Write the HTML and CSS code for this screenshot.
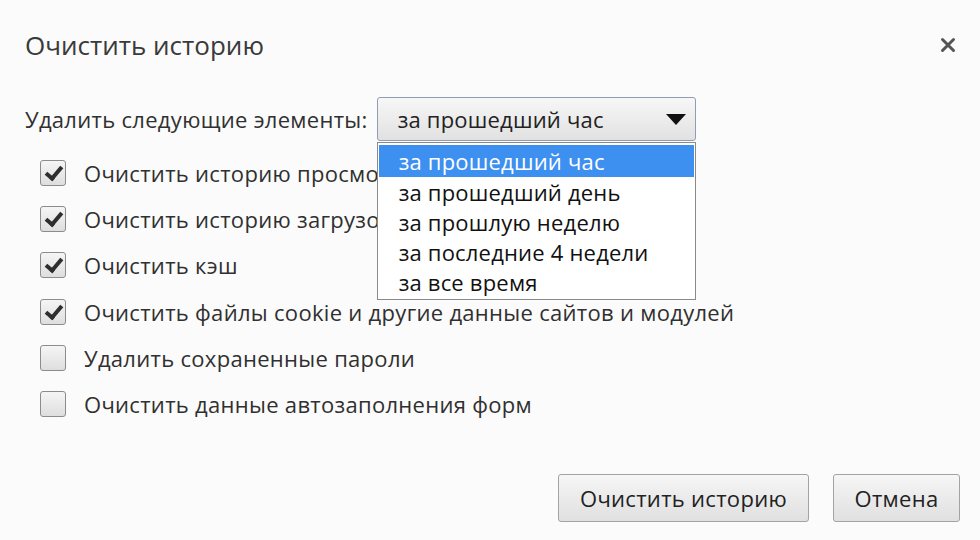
FILE: index.html
```html
<!DOCTYPE html>
<html lang="ru">

<head>
    <meta charset="UTF-8">
    <meta name="viewport" content="width=device-width, initial-scale=1.0">
    <title>Очистить историю</title>
    <link rel="stylesheet" href="styles.css">
</head>

<body>
    <div class="dialog">
        <div class="dialog-header">
            <h1 class="dialog-title">Очистить историю</h1>
            <button class="close-button" aria-label="Закрыть">
                <svg width="16" height="16" viewBox="0 0 16 16">
                    <path d="M2.5 2.5 L13.5 13.5 M13.5 2.5 L2.5 13.5" stroke="#555" stroke-width="3" stroke-linecap="round" />
                </svg>
            </button>
        </div>

        <div class="range-row">
            <span class="range-label">Удалить следующие элементы:</span>
            <div class="range-select">
                <div class="select-box">
                    <span>за прошедший час</span>
                    <span class="select-arrow"></span>
                </div>
                <!-- open dropdown -->
                <ul class="select-list">
                    <li class="selected">за прошедший час</li>
                    <li>за прошедший день</li>
                    <li>за прошлую неделю</li>
                    <li>за последние 4 недели</li>
                    <li>за все время</li>
                </ul>
            </div>
        </div>

        <div class="options">
            <label class="option"><span class="check checked"></span>Очистить историю просмотров</label>
            <label class="option"><span class="check checked"></span>Очистить историю загрузок</label>
            <label class="option"><span class="check checked"></span>Очистить кэш</label>
            <label class="option"><span class="check checked"></span>Очистить файлы cookie и другие данные сайтов и модулей</label>
            <label class="option"><span class="check"></span>Удалить сохраненные пароли</label>
            <label class="option"><span class="check"></span>Очистить данные автозаполнения форм</label>
        </div>

        <div class="dialog-footer">
            <button class="btn btn-wide">Очистить историю</button>
            <button class="btn">Отмена</button>
        </div>
    </div>
</body>

</html>
```

FILE: styles.css
```css
body {
    margin: 0;
    font-family: "Open Sans", "Noto Sans", sans-serif;
    background-color: #fbfbfb;
    color: #303030;
    letter-spacing: 0.3px;
}

.dialog {
    width: 980px;
    height: 540px;
    box-sizing: border-box;
    padding: 29px 20px 0 25px;
    display: flex;
    flex-direction: column;
}

.dialog-header {
    display: flex;
    justify-content: space-between;
    align-items: center;
    height: 32px;
}

.dialog-title {
    margin: 0;
    font-size: 26px;
    font-weight: 400;
    color: #3a3a3a;
    letter-spacing: 0;
}

.close-button {
    border: none;
    background: none;
    padding: 0;
    margin-right: 4px;
    width: 16px;
    height: 16px;
    cursor: pointer;
}

.range-row {
    display: flex;
    align-items: center;
    gap: 9px;
    margin-top: 36px;
}

.range-label {
    font-size: 22px;
}

.range-select {
    position: relative;
    width: 319px;
}

.select-box {
    height: 44px;
    box-sizing: border-box;
    display: flex;
    align-items: center;
    justify-content: space-between;
    padding: 0 9px 0 20px;
    border: 1px solid #8f9cb3;
    border-radius: 3px;
    background: linear-gradient(#f7f7f7, #e1e1e1);
    font-size: 22px;
    color: #222;
    letter-spacing: 0.2px;
}

.select-arrow {
    width: 0;
    height: 0;
    border-left: 10px solid transparent;
    border-right: 10px solid transparent;
    border-top: 11px solid #111;
}

.select-list {
    position: absolute;
    left: 0;
    top: 45px;
    width: 100%;
    box-sizing: border-box;
    margin: 0;
    padding: 2px 1px;
    list-style: none;
    background: #fff;
    border: 1px solid #8a8a8a;
    font-size: 22px;
    color: #111;
    letter-spacing: 0.2px;
}

.select-list li {
    height: 30px;
    line-height: 30px;
    padding-left: 20px;
}

.select-list li.selected {
    background-color: #3d8ff0;
    color: #fff;
    height: 32px;
    line-height: 32px;
}

.options {
    margin-top: 9px;
    display: flex;
    flex-direction: column;
}

.option {
    display: flex;
    align-items: center;
    height: 46.2px;
    font-size: 22px;
    padding-left: 15px;
}

.check {
    width: 26px;
    height: 26px;
    box-sizing: border-box;
    border: 1px solid #8c8c8c;
    border-radius: 3px;
    background: linear-gradient(#f5f5f5, #dedede);
    margin-right: 18px;
    flex-shrink: 0;
    position: relative;
}

.check.checked::after {
    content: '';
    position: absolute;
    left: 8px;
    top: 2px;
    width: 6px;
    height: 13px;
    border-right: 4px solid #2e2e2e;
    border-bottom: 4px solid #2e2e2e;
    transform: rotate(40deg);
}

.dialog-footer {
    margin-top: auto;
    margin-bottom: 18px;
    display: flex;
    justify-content: flex-end;
    gap: 24px;
}

.btn {
    height: 48px;
    min-width: 127px;
    padding: 0 20px;
    font-family: "Open Sans", "Noto Sans", sans-serif;
    font-size: 22px;
    letter-spacing: 0.3px;
    color: #222;
    border: 1px solid #a3a3a3;
    border-radius: 3px;
    background: linear-gradient(#f6f6f6, #e0e0e0);
    cursor: pointer;
}

.btn-wide {
    width: 251px;
}
```
